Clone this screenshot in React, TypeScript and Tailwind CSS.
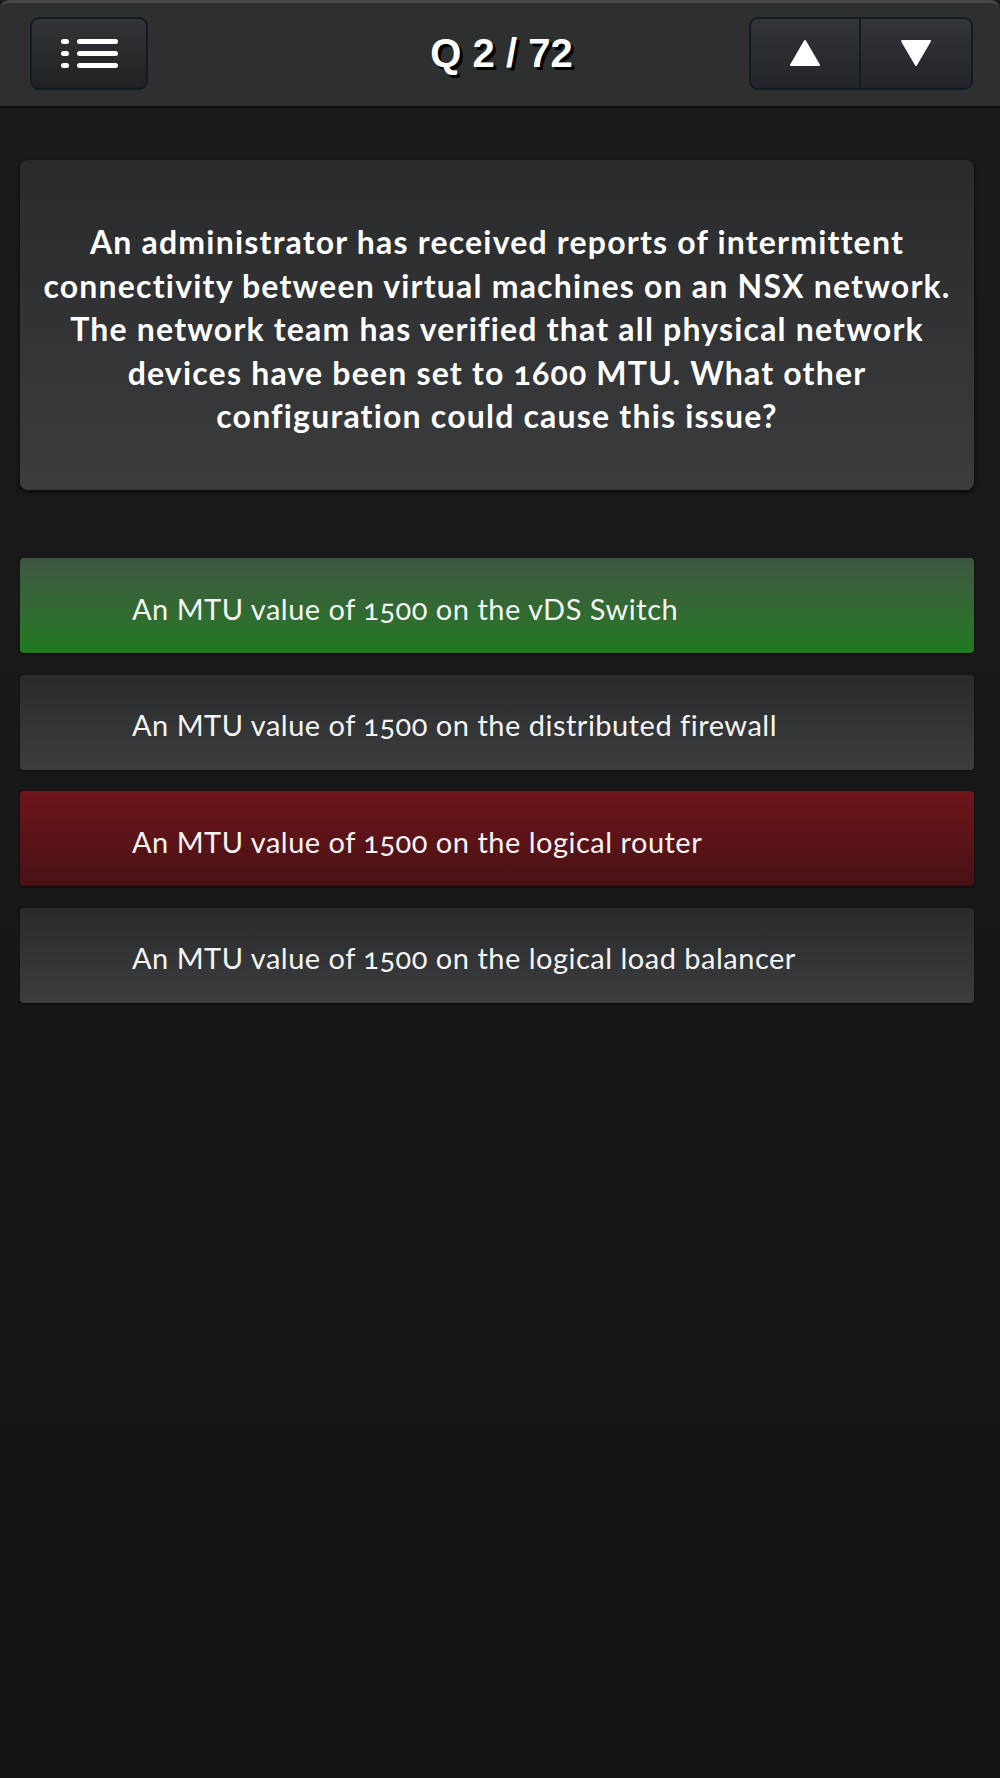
import React from "react";

type Answer = {
	text: string;
	state: "correct" | "wrong" | "idle";
};

const answers: Answer[] = [
	{ text: "An MTU value of 1500 on the vDS Switch", state: "correct" },
	{ text: "An MTU value of 1500 on the distributed firewall", state: "idle" },
	{ text: "An MTU value of 1500 on the logical router", state: "wrong" },
	{ text: "An MTU value of 1500 on the logical load balancer", state: "idle" },
];

function MenuIcon() {
	return (
		<svg width="57" height="29" viewBox="0 0 57 29" fill="#ffffff">
			<rect x="0" y="0" width="8" height="5" rx="2.5" />
			<rect x="16" y="0" width="41" height="5" rx="2.5" />
			<rect x="0" y="12" width="8" height="5" rx="2.5" />
			<rect x="16" y="12" width="41" height="5" rx="2.5" />
			<rect x="0" y="24" width="8" height="5" rx="2.5" />
			<rect x="16" y="24" width="41" height="5" rx="2.5" />
		</svg>
	);
}

function Triangle({ down }: { down?: boolean }) {
	return (
		<svg width="32" height="28" viewBox="0 0 32 28">
			<polygon
				points={down ? "2,2 30,2 16,26" : "16,2 30,26 2,26"}
				fill="#ffffff"
				stroke="#ffffff"
				strokeWidth="2"
				strokeLinejoin="round"
			/>
		</svg>
	);
}

function AnswerRow({ answer }: { answer: Answer }) {
	const bg =
		answer.state === "correct"
			? "bg-gradient-to-b from-[#3d5640] to-[#1f7a1f]"
			: answer.state === "wrong"
				? "bg-gradient-to-b from-[#6e151a] to-[#481114]"
				: "bg-gradient-to-b from-[#292a2b] to-[#3b3d3f]";
	return (
		<div
			className={`${bg} h-[95px] rounded-[4px] flex items-center pl-[112px] pt-[6px] shadow-[0_1px_2px_rgba(0,0,0,0.6)]`}
		>
			<p className="text-[29px] text-[#f4f4f4] tracking-[0.5px] oldstyle-nums">
				{answer.text}
			</p>
		</div>
	);
}

export default function App() {
	return (
		<div className="w-[1000px] min-h-[1778px] bg-gradient-to-b from-[#1b1b1b] to-[#131313] font-['Lato','Open_Sans',sans-serif]">
			<header className="h-[106px] bg-[#2e2f2f] rounded-t-[9px] border-t-[3px] border-[#474848] grid grid-cols-[1fr_auto_1fr] items-center pl-[30px] pr-[27px] shadow-[0_2px_0_#111]">
				<div className="justify-self-start">
					<button className="w-[118px] h-[73px] mt-[-3px] rounded-[9px] border-2 border-[#111b24] bg-gradient-to-b from-[#323437] to-[#1f2123] flex items-center justify-center">
						<MenuIcon />
					</button>
				</div>
				<h1 className="text-[40px] leading-none font-bold text-white font-['Liberation_Sans',Arial,sans-serif] [text-shadow:3px_3px_0_#000] mt-[-3px]">
					Q 2 / 72
				</h1>
				<div className="justify-self-end flex mt-[-3px] rounded-[9px] border-2 border-[#111b24] overflow-hidden">
					<button className="w-[110px] h-[69px] bg-gradient-to-b from-[#323437] to-[#222427] border-r-2 border-[#111b24] flex items-center justify-center">
						<Triangle />
					</button>
					<button className="w-[110px] h-[69px] bg-gradient-to-b from-[#323437] to-[#222427] flex items-center justify-center">
						<Triangle down />
					</button>
				</div>
			</header>

			<main className="ml-[20px] w-[954px] pt-[54px]">
				<section className="h-[330px] rounded-[8px] bg-gradient-to-b from-[#292a2b] to-[#3a3c3e] shadow-[0_2px_4px_rgba(0,0,0,0.7)] flex items-center justify-center pt-[8px]">
					<p className="text-center text-white font-bold text-[32px] tracking-[1.2px] leading-[43.5px] oldstyle-nums">
						An administrator has received reports of intermittent
						<br />
						connectivity between virtual machines on an NSX network.
						<br />
						The network team has verified that all physical network
						<br />
						devices have been set to 1600 MTU. What other
						<br />
						configuration could cause this issue?
					</p>
				</section>

				<div className="mt-[68px] flex flex-col gap-[21.5px]">
					{answers.map((a) => (
						<AnswerRow key={a.text} answer={a} />
					))}
				</div>
			</main>
		</div>
	);
}
